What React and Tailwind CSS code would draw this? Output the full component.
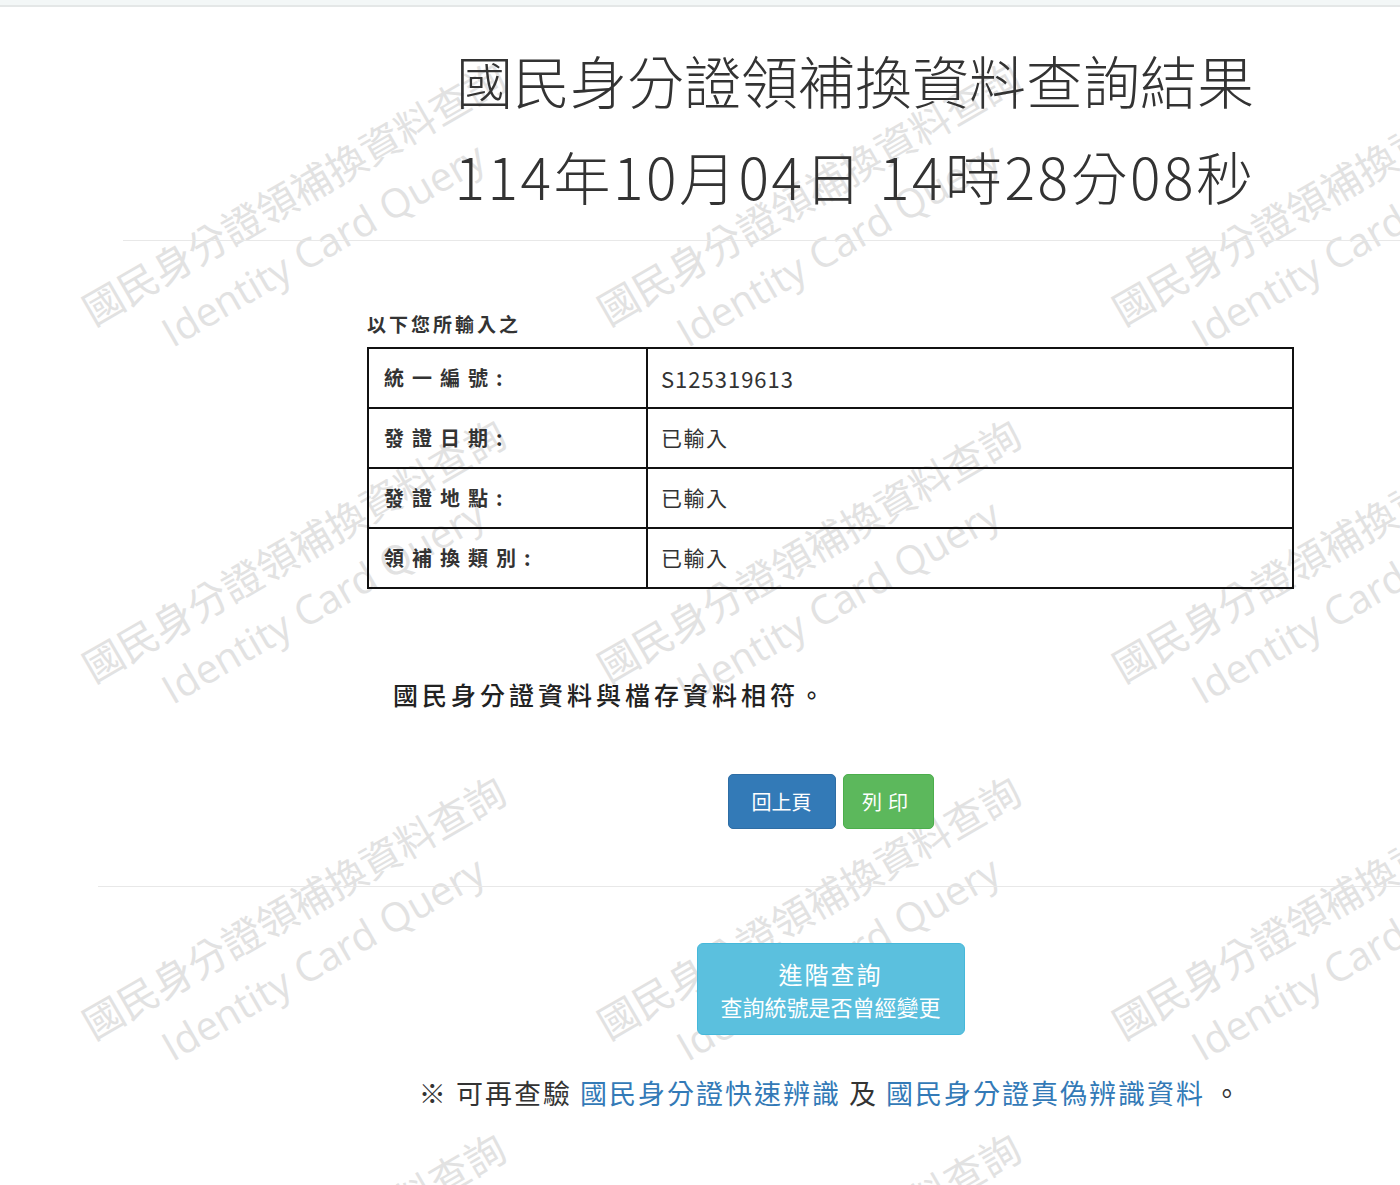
import React from 'react';

const rows = [
  { label: '統一編號:', value: 'S125319613', mono: true },
  { label: '發證日期:', value: '已輸入' },
  { label: '發證地點:', value: '已輸入' },
  { label: '領補換類別:', value: '已輸入' },
];

// watermark tiles, one grid over the whole page
const marks = [];
for (let j = 0; j < 4; j++) {
  for (let i = 0; i < 3; i++) {
    marks.push({ x: 308 + 515 * i, y: 218 + 357 * j });
  }
}

function Watermark() {
  return (
    <div className="absolute inset-0 overflow-hidden pointer-events-none select-none">
      {marks.map((m, idx) => (
        <div
          key={idx}
          className="absolute text-center whitespace-nowrap text-[#e2e2e2]"
          style={{ left: m.x, top: m.y, transform: 'translate(-50%, -50%) rotate(-30deg)' }}
        >
          <div className="text-[40px] leading-[59px] font-['Noto_Sans_CJK_TC',sans-serif]">國民身分證領補換資料查詢</div>
          <div className="text-[40px] leading-[59px] font-['Open_Sans',sans-serif]">Identity Card Query</div>
        </div>
      ))}
    </div>
  );
}

export default function App() {
  return (
    <div className="relative min-h-[1185px] w-full overflow-hidden bg-white text-[#333] font-['Noto_Sans_CJK_TC',sans-serif]">
      {/* top bar */}
      <div className="h-[7px] bg-[#f3f7f7] border-b-2 border-[#e4e7e7]"></div>

      <Watermark />

      <div className="relative">
        {/* title */}
        <div className="pl-[310px] pt-[24px] text-center font-light">
          <div className="text-[57px] leading-[96px]">國民身分證領補換資料查詢結果</div>
          <div className="text-[57px] leading-[96px] tracking-[2.5px]">114年10月04日 14時28分08秒</div>
        </div>

        <div className="ml-[123px] mt-[17px] border-t border-[#e8e8e8]"></div>

        {/* result column */}
        <div className="ml-[367px] w-[927px]">
          <div className="mt-[70px] text-[19px] leading-[26px] font-bold tracking-[3px] text-[#333]">以下您所輸入之</div>

          <table className="mt-[10px] w-full border-collapse border-2 border-[#111]">
            <tbody>
              {rows.map((r) => (
                <tr key={r.label} className="h-[60px]">
                  <td className="w-[279px] border-2 border-[#111] pl-[15px] text-[20px] font-bold tracking-[8px] text-[#333]">
                    {r.label}
                  </td>
                  <td className={`border-2 border-[#111] pl-[13px] text-[#333] ${r.mono ? 'text-[22px] tracking-[1px]' : 'text-[21px] tracking-[1.5px]'}`}>
                    {r.value}
                  </td>
                </tr>
              ))}
            </tbody>
          </table>

          <div className="mt-[88px] pl-[26px] text-[25px] leading-[34px] font-medium tracking-[4px] text-[#222]">
            國民身分證資料與檔存資料相符。
          </div>

          <div className="mt-[63px] flex justify-center gap-[7px]">
            <button className="h-[55px] w-[108px] rounded-[5px] border border-[#2e6da4] bg-[#337ab7] text-[20px] text-white">
              回上頁
            </button>
            <button className="h-[55px] w-[91px] rounded-[5px] border border-[#4cae4c] bg-[#5cb85c] text-[20px] tracking-[6px] text-white">
              列印
            </button>
          </div>
        </div>

        <div className="ml-[98px] mt-[57px] border-t border-[#e8e8e8]"></div>

        <div className="ml-[367px] w-[927px]">
          <div className="mt-[56px] flex justify-center">
            <button className="flex h-[92px] w-[268px] flex-col items-center justify-center rounded-[6px] border border-[#46b8da] bg-[#5bc0de] text-white">
              <span className="text-[24px] leading-[34px] tracking-[2px]">進階查詢</span>
              <span className="text-[22px] leading-[30px]">查詢統號是否曾經變更</span>
            </button>
          </div>

          <div className="mt-[40px] text-center text-[27px] leading-[36px] tracking-[2px] text-[#333]">
            ※ 可再查驗 <a className="text-[#337ab7]">國民身分證快速辨識</a> 及 <a className="text-[#337ab7]">國民身分證真偽辨識資料</a> 。
          </div>
        </div>
      </div>
    </div>
  );
}
